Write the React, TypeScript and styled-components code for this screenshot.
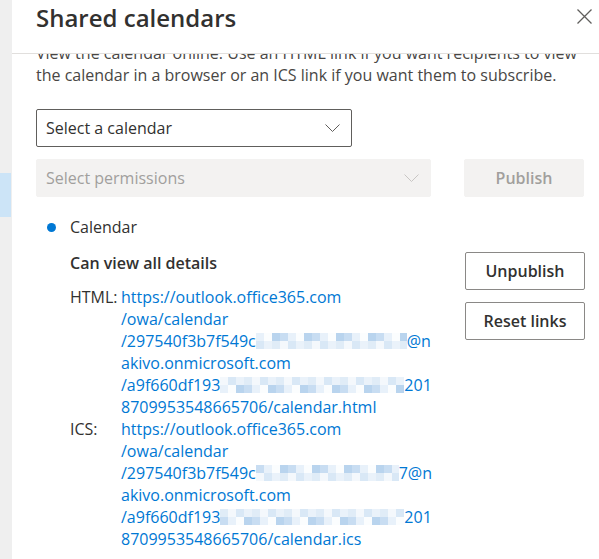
import React, { useLayoutEffect, useRef } from 'react'
import styled, { createGlobalStyle } from 'styled-components'

const GlobalStyle = createGlobalStyle`
  html, body {
    margin: 0;
    padding: 0;
    background: #fff;
  }
  body {
    font-family: 'Open Sans', 'Noto Sans', sans-serif;
    color: #323130;
  }
  * { box-sizing: border-box; }
`

const Page = styled.div`
  display: flex;
  width: 599px;
  height: 559px;
  overflow: hidden;
`

const SideStrip = styled.div`
  width: 12px;
  background: #efefef;
  display: flex;
  flex-direction: column;
  padding-top: 173px;
`

const SideHighlight = styled.div`
  height: 44px;
  width: 11px;
  background: #cce4f7;
`

const Panel = styled.div`
  flex: 1;
  display: flex;
  flex-direction: column;
  background: #fff;
  min-width: 0;
`

const Header = styled.div`
  height: 54px;
  flex-shrink: 0;
  display: flex;
  align-items: flex-start;
  justify-content: space-between;
  padding: 2px 1px 0 24px;
  border-bottom: 1px solid #e1dfdd;
`

const Title = styled.h2`
  margin: 0;
  font-size: 24px;
  line-height: 32px;
  font-weight: 600;
  color: #323130;
`

const CloseButton = styled.button`
  border: none;
  background: none;
  padding: 7px 6px;
  margin: 0;
  display: flex;
  cursor: pointer;
`

const Body = styled.div`
  flex: 1;
  overflow: hidden;
`

const Content = styled.div`
  padding: 16px 15px 40px 24px;
`

const Description = styled.p`
  margin: 0 0 23px;
  font-size: 16px;
  line-height: 22px;
  color: #484644;
`

const FormRow = styled.div`
  display: flex;
  align-items: center;
  gap: 33px;
  margin-bottom: 12px;
`

const Dropdown = styled.div<{ $width: number; $disabled?: boolean }>`
  width: ${(p) => p.$width}px;
  height: 38px;
  display: flex;
  align-items: center;
  justify-content: space-between;
  padding: 0 11px 0 9px;
  border-radius: 2px;
  font-size: 16px;
  border: 1px solid ${(p) => (p.$disabled ? '#f3f2f1' : '#605e5c')};
  background: ${(p) => (p.$disabled ? '#f3f2f1' : '#fff')};
  color: ${(p) => (p.$disabled ? '#a19f9d' : '#323130')};

  svg {
    color: ${(p) => (p.$disabled ? '#c8c6c4' : '#605e5c')};
  }
`

const Button = styled.button<{ $disabled?: boolean }>`
  width: 120px;
  height: 38px;
  border-radius: 2px;
  font-family: inherit;
  font-size: 16px;
  font-weight: 600;
  padding: 0;
  border: 1px solid ${(p) => (p.$disabled ? '#f3f2f1' : '#8a8886')};
  background: ${(p) => (p.$disabled ? '#f3f2f1' : '#fff')};
  color: ${(p) => (p.$disabled ? '#a19f9d' : '#323130')};
`

const CalendarItem = styled.div`
  display: flex;
  align-items: center;
  margin-top: 19px;
  padding-left: 11px;
  font-size: 16px;
  line-height: 22px;
`

const Bullet = styled.span`
  width: 9px;
  height: 9px;
  border-radius: 50%;
  background: #0078d4;
  margin-right: 14px;
`

const DetailRow = styled.div`
  display: flex;
  padding-left: 34px;
  margin-top: 14px;
`

const Details = styled.div`
  flex: 1;
  font-size: 16px;
  line-height: 22px;
`

const Permission = styled.div`
  font-weight: 600;
  margin-bottom: 12px;
`

const LinkGrid = styled.div`
  display: grid;
  grid-template-columns: 51px 1fr;
`

const LinkLabel = styled.div`
  color: #323130;
`

const LinkText = styled.a`
  color: #0078d4;
  text-decoration: none;
  display: flex;
  flex-direction: column;
`

const LinkLine = styled.span`
  display: flex;
  align-items: center;
  white-space: nowrap;
  height: 22px;
`

const Redacted = styled.span<{ $width: number }>`
  display: inline-grid;
  grid-auto-flow: column;
  grid-template-rows: 8px 8px;
  width: ${(p) => p.$width}px;
  height: 16px;
  overflow: hidden;
  background: #e4eef8;
`

const Cell = styled.span<{ $c: string }>`
  width: 8px;
  background: ${(p) => p.$c};
`

const ButtonColumn = styled.div`
  display: flex;
  flex-direction: column;
  gap: 12px;
  width: 119px;
  margin-left: 8px;
  flex-shrink: 0;
`

const palette = ['#e8f1fa', '#d9e8f6', '#c8ddf2', '#f4f8fc', '#b9d4ee', '#e0ecf7', '#fbfdfe', '#eaf2fa']

function Blur({ width, seed }: { width: number; seed: number }) {
  const count = Math.ceil(width / 8) * 2
  const cells = []
  let s = seed
  for (let i = 0; i < count; i++) {
    s = (s * 9301 + 49297) % 233280
    cells.push(<Cell key={i} $c={palette[s % palette.length]} />)
  }
  return <Redacted $width={width}>{cells}</Redacted>
}

function Chevron() {
  return (
    <svg width="15" height="8" viewBox="0 0 15 8" fill="none">
      <path d="M0.5 0.5 L7.5 7.5 L14.5 0.5" stroke="currentColor" strokeWidth="1" />
    </svg>
  )
}

function CloseIcon() {
  return (
    <svg width="15" height="15" viewBox="0 0 15 15" fill="none">
      <path d="M0.5 0.5 L14.5 14.5 M14.5 0.5 L0.5 14.5" stroke="#605e5c" strokeWidth="1.3" />
    </svg>
  )
}

type LinkProps = { ext: string; tail: string; seed: number; w1: number; w2: number }

function CalendarLink({ ext, tail, seed, w1, w2 }: LinkProps) {
  return (
    <LinkText href="#">
      <LinkLine>https://outlook.office365.com</LinkLine>
      <LinkLine>/owa/calendar</LinkLine>
      <LinkLine>
        /297540f3b7f549c<Blur width={w1} seed={seed} />
        {tail}
      </LinkLine>
      <LinkLine>akivo.onmicrosoft.com</LinkLine>
      <LinkLine>
        /a9f660df193<Blur width={w2} seed={seed + 7} />
        201
      </LinkLine>
      <LinkLine>8709953548665706/calendar.{ext}</LinkLine>
    </LinkText>
  )
}

export default function App() {
  const bodyRef = useRef<HTMLDivElement>(null)

  useLayoutEffect(() => {
    if (bodyRef.current) bodyRef.current.scrollTop = 28
  }, [])

  return (
    <>
      <GlobalStyle />
      <Page>
        <SideStrip>
          <SideHighlight />
        </SideStrip>
        <Panel>
          <Header>
            <Title>Shared calendars</Title>
            <CloseButton aria-label="Close">
              <CloseIcon />
            </CloseButton>
          </Header>
          <Body ref={bodyRef}>
            <Content>
              <Description>
                View the calendar online. Use an HTML link if you want recipients to view the calendar in a
                browser or an ICS link if you want them to subscribe.
              </Description>
              <FormRow>
                <Dropdown $width={316}>
                  Select a calendar
                  <Chevron />
                </Dropdown>
              </FormRow>
              <FormRow>
                <Dropdown $width={395} $disabled>
                  Select permissions
                  <Chevron />
                </Dropdown>
                <Button $disabled>Publish</Button>
              </FormRow>
              <CalendarItem>
                <Bullet />
                Calendar
              </CalendarItem>
              <DetailRow>
                <Details>
                  <Permission>Can view all details</Permission>
                  <LinkGrid>
                    <LinkLabel>HTML:</LinkLabel>
                    <CalendarLink ext="html" tail="@n" seed={11} w1={151} w2={184} />
                    <LinkLabel>ICS:</LinkLabel>
                    <CalendarLink ext="ics" tail="7@n" seed={37} w1={143} w2={184} />
                  </LinkGrid>
                </Details>
                <ButtonColumn>
                  <Button>Unpublish</Button>
                  <Button>Reset links</Button>
                </ButtonColumn>
              </DetailRow>
            </Content>
          </Body>
        </Panel>
      </Page>
    </>
  )
}
